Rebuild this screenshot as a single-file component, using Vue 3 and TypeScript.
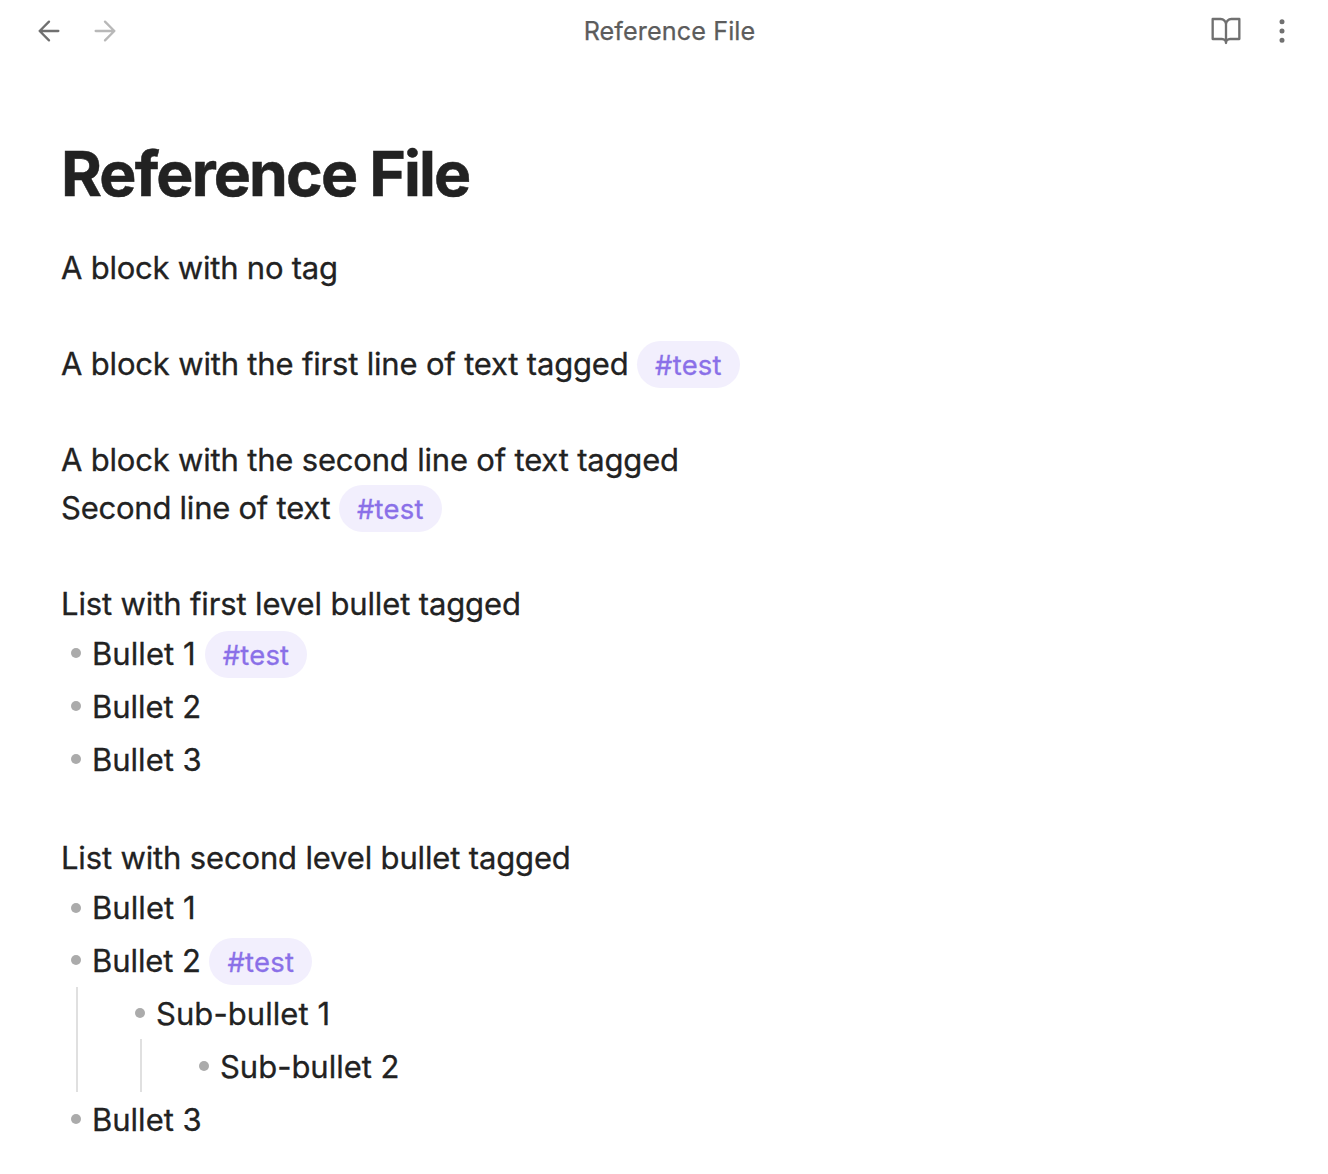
<script setup lang="ts">
interface Line {
  text: string
  tag?: string
  kind?: 'gap' | 'item'
  guides?: number
  spacing?: number
}

const lines: Line[] = [
  { text: 'A block with no tag', spacing: -0.22 },
  { text: '', kind: 'gap' },
  { text: 'A block with the first line of text tagged', tag: '#test', spacing: -0.18 },
  { text: '', kind: 'gap' },
  { text: 'A block with the second line of text tagged', spacing: -0.19 },
  { text: 'Second line of text', tag: '#test', spacing: -0.24 },
  { text: '', kind: 'gap' },
  { text: 'List with first level bullet tagged', spacing: -0.13 },
  { text: 'Bullet 1', kind: 'item', tag: '#test', spacing: 0.08 },
  { text: 'Bullet 2', kind: 'item', spacing: -0.03 },
  { text: 'Bullet 3', kind: 'item', spacing: 0 },
  { text: '', kind: 'gap' },
  { text: 'List with second level bullet tagged', spacing: -0.155 },
  { text: 'Bullet 1', kind: 'item', spacing: 0.08 },
  { text: 'Bullet 2', kind: 'item', tag: '#test', spacing: -0.08 },
  { text: 'Sub-bullet 1', kind: 'item', guides: 1, spacing: 0.06 },
  { text: 'Sub-bullet 2', kind: 'item', guides: 2, spacing: -0.02 },
  { text: 'Bullet 3', kind: 'item', spacing: 0 },
]
</script>

<template>
  <div class="view">
    <header class="header">
      <nav class="nav">
        <svg class="icon" viewBox="0 0 24 24"><path d="M19 12H5M12 19l-7-7 7-7" /></svg>
        <svg class="icon disabled" viewBox="0 0 24 24"><path d="M5 12h14M12 5l7 7-7 7" /></svg>
      </nav>
      <div class="header-title">Reference File</div>
      <div class="actions">
        <svg class="icon" viewBox="0 0 24 24">
          <path d="M2 3h6a4 4 0 0 1 4 4v14a3 3 0 0 0-3-3H2zM22 3h-6a4 4 0 0 0-4 4v14a3 3 0 0 1 3-3h7z" />
        </svg>
        <svg class="icon" viewBox="0 0 24 24">
          <circle cx="12" cy="5" r="1" /><circle cx="12" cy="12" r="1" /><circle cx="12" cy="19" r="1" />
        </svg>
      </div>
    </header>
    <main class="note">
      <h1 class="title">Reference File</h1>
      <div v-for="(line, i) in lines" :key="i" class="line" :class="line.kind">
        <span v-for="g in line.guides ?? 0" :key="g" class="guide"></span>
        <span v-if="line.kind === 'item'" class="bullet"></span>
        <span :style="{ letterSpacing: `${line.spacing ?? 0}px` }">{{ line.text }}<template v-if="line.tag">&nbsp;<span class="tag">{{ line.tag }}</span></template></span>
      </div>
    </main>
  </div>
</template>

<style>
body {
  margin: 0;
  background: #fff;
}
</style>

<style scoped>
.view {
  height: 1174px;
  overflow: hidden;
  background: #fff;
  color: #222;
  font-family: Inter, 'Liberation Sans', sans-serif;
}
.header {
  display: grid;
  grid-template-columns: 1fr auto 1fr;
  align-items: center;
  height: 62px;
  padding: 0 30px 0 33px;
}
.nav,
.actions {
  display: flex;
  gap: 24px;
}
.actions {
  justify-content: flex-end;
}
.icon {
  width: 32px;
  height: 32px;
  fill: none;
  stroke: #707070;
  stroke-width: 1.75;
  stroke-linecap: round;
  stroke-linejoin: round;
}
.disabled {
  stroke: #b8b8b8;
}
.header-title {
  padding-left: 8px;
  font-size: 25.2px;
  line-height: 40px;
  letter-spacing: 0.1px;
  color: #5c5c5c;
  -webkit-text-stroke: 0.25px currentColor;
}
.note {
  padding: 73px 61px 0;
}
.title {
  margin: 0 0 32px;
  font-size: 62.4px;
  line-height: 77px;
  font-weight: 700;
  letter-spacing: -1.84px;
  -webkit-text-stroke: 0.5px currentColor;
}
.line {
  display: flex;
  height: 48px;
  font-size: 31px;
  line-height: 48px;
  white-space: nowrap;
  -webkit-text-stroke: 0.3px currentColor;
}
.item {
  height: 52.8px;
  line-height: 52.8px;
}
.bullet {
  flex: none;
  width: 10px;
  height: 10px;
  margin: 20.2px 11px 0 10px;
  border-radius: 50%;
  background: #ababab;
}
.guide {
  box-sizing: border-box;
  flex: none;
  width: 49px;
  height: 52.8px;
  margin: -1.4px 0 0 15px;
  border-left: 2px solid #e0e0e0;
}
.tag {
  padding: 7px 18px 6px;
  border-radius: 28px;
  background: #f2effd;
  color: #8a70e8;
  font-size: 27.4px;
  letter-spacing: 0.25px;
}
</style>
